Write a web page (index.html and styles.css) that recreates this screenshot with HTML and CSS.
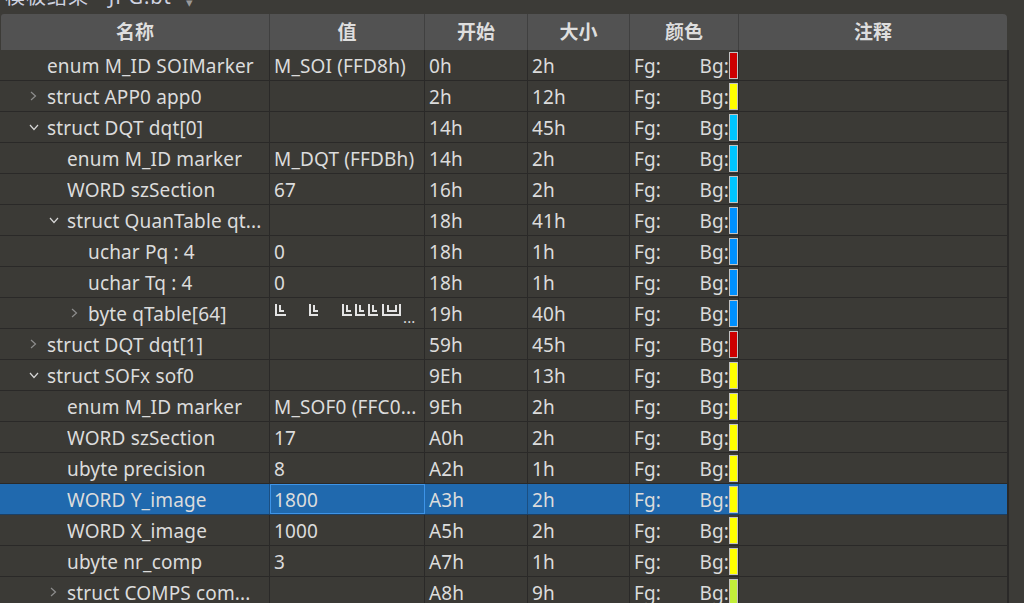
FILE: index.html
```html
<!DOCTYPE html>
<html lang="zh-CN">
<head>
<meta charset="utf-8">
<title>模板结果 - JPG.bt</title>
<link rel="stylesheet" href="styles.css">
</head>
<body>
<div class="app">
  <div class="titlebar"><span class="title-text">模板结果 - JPG.bt</span><span class="title-x">▾</span></div>
  <div class="table-wrap">
    <div class="table">
      <div class="row head">
        <div class="cell c-name">名称</div>
        <div class="cell c-val">值</div>
        <div class="cell c-start">开始</div>
        <div class="cell c-size">大小</div>
        <div class="cell c-color">颜色</div>
        <div class="cell c-note">注释</div>
      </div>

      <div class="row">
        <div class="cell c-name l0"><span class="tw"></span><span class="txt">enum M_ID SOIMarker</span></div>
        <div class="cell c-val">M_SOI (FFD8h)</div>
        <div class="cell c-start">0h</div>
        <div class="cell c-size">2h</div>
        <div class="cell c-color"><span>Fg:</span><span class="bg">Bg:</span><span class="sw red"></span></div>
        <div class="cell c-note"></div>
      </div>
      <div class="row">
        <div class="cell c-name l0"><span class="tw closed"><svg width="7" height="10" viewBox="0 0 7 10"><path d="M1 1 L5.5 5 L1 9" fill="none" stroke="#8d8d8d" stroke-width="1.2"/></svg></span><span class="txt">struct APP0 app0</span></div>
        <div class="cell c-val"></div>
        <div class="cell c-start">2h</div>
        <div class="cell c-size">12h</div>
        <div class="cell c-color"><span>Fg:</span><span class="bg">Bg:</span><span class="sw yellow"></span></div>
        <div class="cell c-note"></div>
      </div>
      <div class="row">
        <div class="cell c-name l0"><span class="tw open"><svg width="10" height="7" viewBox="0 0 10 7"><path d="M1 1 L5 5.5 L9 1" fill="none" stroke="#d6d6d6" stroke-width="1.2"/></svg></span><span class="txt">struct DQT dqt[0]</span></div>
        <div class="cell c-val"></div>
        <div class="cell c-start">14h</div>
        <div class="cell c-size">45h</div>
        <div class="cell c-color"><span>Fg:</span><span class="bg">Bg:</span><span class="sw cyan"></span></div>
        <div class="cell c-note"></div>
      </div>
      <div class="row">
        <div class="cell c-name l1"><span class="tw"></span><span class="txt">enum M_ID marker</span></div>
        <div class="cell c-val">M_DQT (FFDBh)</div>
        <div class="cell c-start">14h</div>
        <div class="cell c-size">2h</div>
        <div class="cell c-color"><span>Fg:</span><span class="bg">Bg:</span><span class="sw cyan"></span></div>
        <div class="cell c-note"></div>
      </div>
      <div class="row">
        <div class="cell c-name l1"><span class="tw"></span><span class="txt">WORD szSection</span></div>
        <div class="cell c-val">67</div>
        <div class="cell c-start">16h</div>
        <div class="cell c-size">2h</div>
        <div class="cell c-color"><span>Fg:</span><span class="bg">Bg:</span><span class="sw cyan"></span></div>
        <div class="cell c-note"></div>
      </div>
      <div class="row">
        <div class="cell c-name l1"><span class="tw open"><svg width="10" height="7" viewBox="0 0 10 7"><path d="M1 1 L5 5.5 L9 1" fill="none" stroke="#d6d6d6" stroke-width="1.2"/></svg></span><span class="txt">struct QuanTable qt...</span></div>
        <div class="cell c-val"></div>
        <div class="cell c-start">18h</div>
        <div class="cell c-size">41h</div>
        <div class="cell c-color"><span>Fg:</span><span class="bg">Bg:</span><span class="sw blue"></span></div>
        <div class="cell c-note"></div>
      </div>
      <div class="row">
        <div class="cell c-name l2"><span class="tw"></span><span class="txt">uchar Pq : 4</span></div>
        <div class="cell c-val">0</div>
        <div class="cell c-start">18h</div>
        <div class="cell c-size">1h</div>
        <div class="cell c-color"><span>Fg:</span><span class="bg">Bg:</span><span class="sw blue"></span></div>
        <div class="cell c-note"></div>
      </div>
      <div class="row">
        <div class="cell c-name l2"><span class="tw"></span><span class="txt">uchar Tq : 4</span></div>
        <div class="cell c-val">0</div>
        <div class="cell c-start">18h</div>
        <div class="cell c-size">1h</div>
        <div class="cell c-color"><span>Fg:</span><span class="bg">Bg:</span><span class="sw blue"></span></div>
        <div class="cell c-note"></div>
      </div>
      <div class="row">
        <div class="cell c-name l2"><span class="tw closed"><svg width="7" height="10" viewBox="0 0 7 10"><path d="M1 1 L5.5 5 L1 9" fill="none" stroke="#8d8d8d" stroke-width="1.2"/></svg></span><span class="txt">byte qTable[64]</span></div>
        <div class="cell c-val boxes"><span class="gl g1"></span><span class="gl g2"></span><span class="gl g3"></span><span class="gl g4"></span><span class="gl g5"></span><span class="gl gu"></span><span class="ell">...</span></div>
        <div class="cell c-start">19h</div>
        <div class="cell c-size">40h</div>
        <div class="cell c-color"><span>Fg:</span><span class="bg">Bg:</span><span class="sw blue"></span></div>
        <div class="cell c-note"></div>
      </div>
      <div class="row">
        <div class="cell c-name l0"><span class="tw closed"><svg width="7" height="10" viewBox="0 0 7 10"><path d="M1 1 L5.5 5 L1 9" fill="none" stroke="#8d8d8d" stroke-width="1.2"/></svg></span><span class="txt">struct DQT dqt[1]</span></div>
        <div class="cell c-val"></div>
        <div class="cell c-start">59h</div>
        <div class="cell c-size">45h</div>
        <div class="cell c-color"><span>Fg:</span><span class="bg">Bg:</span><span class="sw red"></span></div>
        <div class="cell c-note"></div>
      </div>
      <div class="row">
        <div class="cell c-name l0"><span class="tw open"><svg width="10" height="7" viewBox="0 0 10 7"><path d="M1 1 L5 5.5 L9 1" fill="none" stroke="#d6d6d6" stroke-width="1.2"/></svg></span><span class="txt">struct SOFx sof0</span></div>
        <div class="cell c-val"></div>
        <div class="cell c-start">9Eh</div>
        <div class="cell c-size">13h</div>
        <div class="cell c-color"><span>Fg:</span><span class="bg">Bg:</span><span class="sw yellow"></span></div>
        <div class="cell c-note"></div>
      </div>
      <div class="row">
        <div class="cell c-name l1"><span class="tw"></span><span class="txt">enum M_ID marker</span></div>
        <div class="cell c-val">M_SOF0 (FFC0...</div>
        <div class="cell c-start">9Eh</div>
        <div class="cell c-size">2h</div>
        <div class="cell c-color"><span>Fg:</span><span class="bg">Bg:</span><span class="sw yellow"></span></div>
        <div class="cell c-note"></div>
      </div>
      <div class="row">
        <div class="cell c-name l1"><span class="tw"></span><span class="txt">WORD szSection</span></div>
        <div class="cell c-val">17</div>
        <div class="cell c-start">A0h</div>
        <div class="cell c-size">2h</div>
        <div class="cell c-color"><span>Fg:</span><span class="bg">Bg:</span><span class="sw yellow"></span></div>
        <div class="cell c-note"></div>
      </div>
      <div class="row">
        <div class="cell c-name l1"><span class="tw"></span><span class="txt">ubyte precision</span></div>
        <div class="cell c-val">8</div>
        <div class="cell c-start">A2h</div>
        <div class="cell c-size">1h</div>
        <div class="cell c-color"><span>Fg:</span><span class="bg">Bg:</span><span class="sw yellow"></span></div>
        <div class="cell c-note"></div>
      </div>
      <div class="row selected">
        <div class="cell c-name l1"><span class="tw"></span><span class="txt">WORD Y_image</span></div>
        <div class="cell c-val editing">1800</div>
        <div class="cell c-start">A3h</div>
        <div class="cell c-size">2h</div>
        <div class="cell c-color"><span>Fg:</span><span class="bg">Bg:</span><span class="sw yellow"></span></div>
        <div class="cell c-note"></div>
      </div>
      <div class="row">
        <div class="cell c-name l1"><span class="tw"></span><span class="txt">WORD X_image</span></div>
        <div class="cell c-val">1000</div>
        <div class="cell c-start">A5h</div>
        <div class="cell c-size">2h</div>
        <div class="cell c-color"><span>Fg:</span><span class="bg">Bg:</span><span class="sw yellow"></span></div>
        <div class="cell c-note"></div>
      </div>
      <div class="row">
        <div class="cell c-name l1"><span class="tw"></span><span class="txt">ubyte nr_comp</span></div>
        <div class="cell c-val">3</div>
        <div class="cell c-start">A7h</div>
        <div class="cell c-size">1h</div>
        <div class="cell c-color"><span>Fg:</span><span class="bg">Bg:</span><span class="sw yellow"></span></div>
        <div class="cell c-note"></div>
      </div>
      <div class="row">
        <div class="cell c-name l1"><span class="tw closed"><svg width="7" height="10" viewBox="0 0 7 10"><path d="M1 1 L5.5 5 L1 9" fill="none" stroke="#8d8d8d" stroke-width="1.2"/></svg></span><span class="txt">struct COMPS com...</span></div>
        <div class="cell c-val"></div>
        <div class="cell c-start">A8h</div>
        <div class="cell c-size">9h</div>
        <div class="cell c-color"><span>Fg:</span><span class="bg">Bg:</span><span class="sw lime"></span></div>
        <div class="cell c-note"></div>
      </div>
    </div>
    <div class="vline"></div>
  </div>
</div>
</body>
</html>
```

FILE: styles.css
```css
html, body {
  margin: 0;
  padding: 0;
  background: #3c3b37;
  width: 1024px;
  height: 603px;
  overflow: hidden;
}

body {
  font-family: "Noto Sans", "Noto Sans CJK SC", sans-serif;
  font-size: 19px;
  letter-spacing: 0.15px;
  color: #dcdcdc;
}

.app {
  display: flex;
  flex-direction: column;
}

.titlebar {
  height: 14px;
  overflow: hidden;
  display: flex;
  align-items: flex-end;
  padding-left: 5px;
  gap: 14px;
  color: #cfd3e0;
}

.title-text {
  font-size: 20px;
  line-height: 22px;
  margin-bottom: 6px;
  letter-spacing: 1px;
}

.title-x {
  font-size: 13px;
  line-height: 14px;
  margin-bottom: 5px;
  color: #999;
}

.table-wrap {
  display: flex;
  align-items: stretch;
}

.table {
  width: 1007px;
  display: flex;
  flex-direction: column;
}

.vline {
  width: 2px;
  margin-top: 36px;
  background: #2a2928;
}

.row {
  display: grid;
  grid-template-columns: 270px 155px 103px 102px 109px 268px;
  height: 31px;
  box-sizing: border-box;
  border-bottom: 1px solid #2a2928;
  background: #3b3a36;
}

.row.head {
  height: 36px;
  border-bottom: none;
  background: #525252;
  margin-left: 1px;
  border-radius: 3px 4px 0 0;
  grid-template-columns: 269px 155px 103px 102px 109px 268px;
}

.cell {
  box-sizing: border-box;
  border-right: 1px solid #2a2928;
  display: flex;
  align-items: center;
  white-space: nowrap;
  overflow: hidden;
  padding-left: 4px;
  padding-top: 2px;
  line-height: 28px;
}

.cell.c-note {
  border-right: none;
}

.head .cell {
  justify-content: center;
  padding-left: 0;
  padding-top: 0;
  border-right: 1px solid #404040;
  font-weight: bold;
  color: #dedede;
  line-height: 36px;
  letter-spacing: 0;
}

.head .cell.c-note {
  border-right: none;
}

.c-name.l0 { padding-left: 28px; }
.c-name.l1 { padding-left: 48px; }
.c-name.l2 { padding-left: 69px; }

.tw {
  width: 19px;
  display: flex;
  align-items: center;
  flex: none;
  margin-top: -2px;
}

.tw.closed { padding-left: 2px; width: 17px; }
.tw.open { padding-left: 1px; width: 18px; }

.tw svg { display: block; }

.txt {
  overflow: hidden;
}

.c-color {
  padding-right: 0;
}

.c-color .bg {
  margin-left: auto;
}

.sw {
  width: 7px;
  height: 25px;
  border: 1px solid #c2c2c2;
  align-self: flex-start;
  margin-top: 0;
  flex: none;
}

.sw.red { background: #cc0000; }
.sw.yellow { background: #ffff00; }
.sw.cyan { background: #00c4ff; }
.sw.blue { background: #0090ff; }
.sw.lime { background: #c2ee3a; }

.row.selected {
  background: #2069ae;
  border-bottom-color: #1c3f63;
}

.row.selected .cell {
  border-right-color: #1b4f82;
}

.row.selected .c-val.editing {
  border: 1px solid #3d94e8;
  padding-left: 3px;
  padding-top: 1px;
}

.boxes {
  align-items: center;
}

.gl {
  position: relative;
  display: inline-block;
  width: 9px;
  height: 12px;
  border-left: 2px solid #e4e4e4;
  border-bottom: 2px solid #e4e4e4;
  box-sizing: border-box;
  margin-top: -8px;
  flex: none;
}

.gl::after {
  content: "";
  position: absolute;
  left: 2px;
  bottom: 2px;
  width: 5px;
  height: 7px;
  border-left: 2px solid #e4e4e4;
  border-bottom: 2px solid #e4e4e4;
  box-sizing: border-box;
}

.g1 { margin-left: 1px; width: 11px; }
.g2 { margin-left: 23px; }
.g3 { margin-left: 24px; width: 10px; }
.g4 { margin-left: 3px; width: 10px; }
.g5 { margin-left: 3px; width: 10px; }

.gu {
  margin-left: 4px;
  width: 19px;
  border-right: 2px solid #e4e4e4;
}

.gu::after {
  left: 3px;
  width: 10px;
  border-right: 2px solid #e4e4e4;
}

.ell {
  margin-left: 2px;
  font-size: 15px;
  line-height: 20px;
  margin-top: 6px;
}
```
